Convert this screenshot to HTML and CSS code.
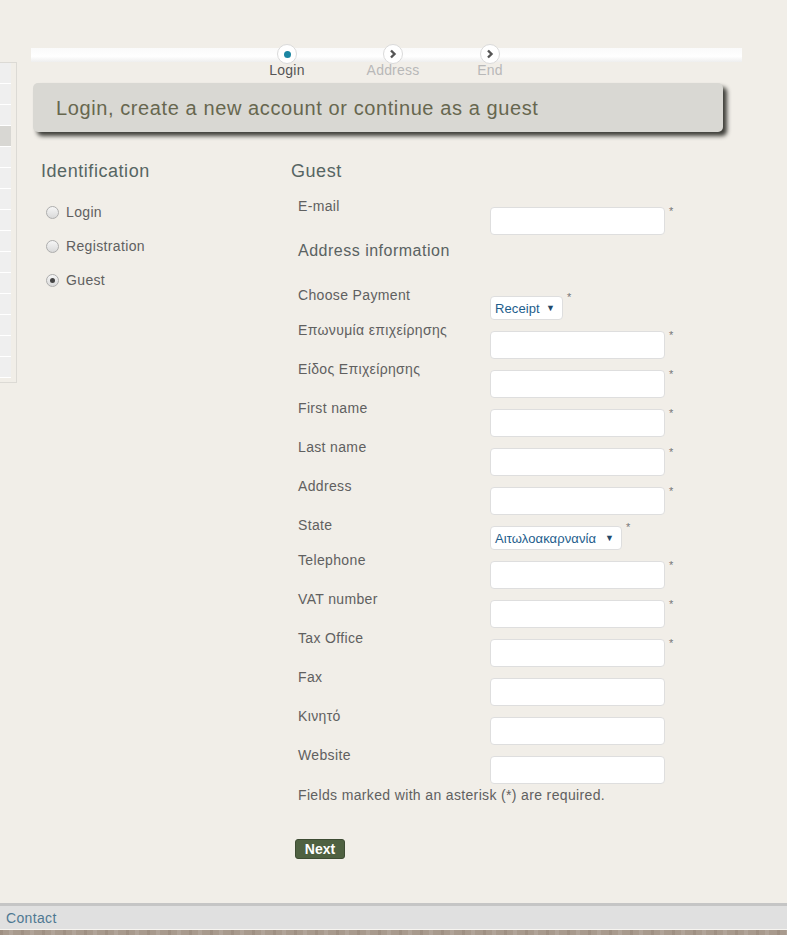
FILE: index.html
```html
<!DOCTYPE html>
<html lang="en">
  <head>
    <meta charset="UTF-8">
    <title>Checkout</title>
    <link rel="stylesheet" href="styles.css">
  </head>
  <body>
    <div class="page">
      <div class="side-stub">
        <ul class="stub-list">
          <li></li><li></li><li></li><li class="active"></li><li></li>
          <li></li><li></li><li></li><li></li><li></li>
          <li></li><li></li><li></li><li></li><li></li>
        </ul>
      </div>

      <div class="content">
        <div class="steps">
          <div class="step step-login current">
            <span class="dot"><i></i></span>
            <span class="step-label">Login</span>
          </div>
          <div class="step step-address">
            <span class="dot"><svg width="10" height="10" viewBox="0 0 10 10"><path d="M3 1.5 L6.5 5 L3 8.5" fill="none" stroke="#555" stroke-width="2.4"/></svg></span>
            <span class="step-label">Address</span>
          </div>
          <div class="step step-end">
            <span class="dot"><svg width="10" height="10" viewBox="0 0 10 10"><path d="M3 1.5 L6.5 5 L3 8.5" fill="none" stroke="#555" stroke-width="2.4"/></svg></span>
            <span class="step-label">End</span>
          </div>
        </div>

        <h1 class="title-box">Login, create a new account or continue as a guest</h1>

        <div class="columns">
          <div class="ident">
            <h2>Identification</h2>
            <ul class="choices">
              <li><span class="radio"></span>Login</li>
              <li><span class="radio"></span>Registration</li>
              <li><span class="radio checked"></span>Guest</li>
            </ul>
          </div>

          <div class="guest">
            <h2>Guest</h2>
            <form class="guest-form">
              <div class="row"><label>E-mail</label><input type="text"><span class="req">*</span></div>
              <h3>Address information</h3>
              <div class="row row-select"><label>Choose Payment</label><span class="select">Receipt<b>&#9660;</b></span><span class="req">*</span></div>
              <div class="row"><label>Επωνυμία επιχείρησης</label><input type="text"><span class="req">*</span></div>
              <div class="row"><label>Είδος Επιχείρησης</label><input type="text"><span class="req">*</span></div>
              <div class="row"><label>First name</label><input type="text"><span class="req">*</span></div>
              <div class="row"><label>Last name</label><input type="text"><span class="req">*</span></div>
              <div class="row"><label>Address</label><input type="text"><span class="req">*</span></div>
              <div class="row row-select"><label>State</label><span class="select select-wide">Αιτωλοακαρνανία<b>&#9660;</b></span><span class="req">*</span></div>
              <div class="row"><label>Telephone</label><input type="text"><span class="req">*</span></div>
              <div class="row"><label>VAT number</label><input type="text"><span class="req">*</span></div>
              <div class="row"><label>Tax Office</label><input type="text"><span class="req">*</span></div>
              <div class="row"><label>Fax</label><input type="text"></div>
              <div class="row"><label>Κινητό</label><input type="text"></div>
              <div class="row"><label>Website</label><input type="text"></div>
              <p class="note">Fields marked with an asterisk (*) are required.</p>
            </form>
            <button class="next" type="button">Next</button>
          </div>
        </div>
      </div>
    </div>

    <div class="footer">
      <div class="footer-bar">Contact</div>
      <div class="footer-wood"></div>
    </div>
  </body>
</html>
```

FILE: styles.css
```css
html, body {
  margin: 0;
  padding: 0;
}

body {
  background: #f1eee8;
  font-family: "Liberation Sans", Arial, sans-serif;
  font-size: 14px;
  letter-spacing: 0.35px;
  color: #606060;
  height: 935px;
  overflow: hidden;
}

.page {
  display: flex;
  align-items: flex-start;
  height: 903px;
}

/* left sidebar, mostly scrolled off */
.side-stub {
  margin-top: 62px;
  width: 16px;
  border: 1px solid #dcdad5;
  border-left: none;
  padding-bottom: 4px;
}

.stub-list {
  list-style: none;
  margin: 0;
  padding: 0;
  width: 11px;
}

.stub-list li {
  height: 20px;
  background: #efefef;
  border-bottom: 1px solid #fff;
}

.stub-list li.active {
  background: #d8d7d3;
}

.content {
  margin-left: 14px;
  width: 711px;
}

/* progress steps */
.steps {
  margin-top: 48px;
  height: 14px;
  background: linear-gradient(#fafafa, #ffffff 60%, #eeeeee);
  display: flex;
  align-items: flex-start;
  padding-left: 216px;
}

.step {
  width: 80px;
  display: flex;
  flex-direction: column;
  align-items: center;
  margin-top: -4px;
}

.step-address { margin-left: 26px; }
.step-end { margin-left: 17px; }

.dot {
  flex-shrink: 0;
  width: 18px;
  height: 18px;
  border-radius: 50%;
  background: #fff;
  border: 1px solid #dadada;
  display: flex;
  align-items: center;
  justify-content: center;
}

.dot i {
  width: 7px;
  height: 7px;
  border-radius: 50%;
  background: #1b86a2;
}

.step-label {
  font-size: 14px;
  line-height: 14px;
  letter-spacing: 0.2px;
  margin-top: -1px;
  color: #b8b8b8;
}

.current .step-label {
  color: #555;
}

/* title */
.title-box {
  margin: 21px 19px 0 2px;
  height: 49px;
  box-sizing: border-box;
  padding: 13px 0 0 23px;
  background: #d9d8d3;
  border-radius: 5px;
  box-shadow: 4px 4px 4px #3f3f3a;
  font-size: 20px;
  line-height: 24px;
  letter-spacing: 0.6px;
  font-weight: normal;
  color: #67674f;
}

/* columns */
.columns {
  display: flex;
  margin-top: 28px;
}

.ident {
  width: 260px;
  padding-left: 10px;
  box-sizing: border-box;
}

h2 {
  margin: 0;
  font-size: 18px;
  line-height: 22px;
  letter-spacing: 0.55px;
  font-weight: normal;
  color: #566563;
}

.choices {
  list-style: none;
  margin: 13px 0 0;
  padding: 0;
}

.choices li {
  height: 34px;
  display: flex;
  align-items: center;
  padding-left: 5px;
}

.radio {
  width: 11px;
  height: 11px;
  border-radius: 50%;
  border: 1px solid #adadad;
  background: linear-gradient(#f6f6f6, #d9d9d9);
  margin-right: 7px;
  display: flex;
  align-items: center;
  justify-content: center;
}

.radio.checked::after {
  content: "";
  width: 5px;
  height: 5px;
  border-radius: 50%;
  background: #444;
}

.guest {
  flex: 1;
}

.guest-form {
  margin: 17px 0 0 7px;
}

.row {
  display: flex;
  align-items: flex-start;
  height: 39px;
}

.row label {
  width: 192px;
  line-height: 14px;
}

.row input {
  margin: 8px 0 0;
  width: 175px;
  height: 28px;
  box-sizing: border-box;
  border: 1px solid #dedede;
  border-radius: 4px;
  background: #fff;
  padding: 0 6px;
  font: inherit;
}

.row-select {
  height: 35px;
}

.select {
  margin-top: 8px;
  height: 24px;
  box-sizing: border-box;
  border: 1px solid #dedede;
  border-radius: 4px;
  background: #fff;
  display: flex;
  align-items: center;
  justify-content: space-between;
  padding: 0 7px 0 4px;
  color: #1d5d8c;
  font-size: 13px;
  letter-spacing: 0.1px;
  width: 73px;
}

.select-wide {
  width: 132px;
}

.select b {
  font-size: 9px;
  color: #23486a;
  font-weight: normal;
}

.req {
  margin: 6px 0 0 4px;
  font-size: 11px;
  color: #777;
}

.row-select .req {
  margin-top: 3px;
}

.guest-form h3 {
  margin: 5px 0 29px;
  font-size: 16px;
  line-height: 16px;
  letter-spacing: 0.5px;
  font-weight: normal;
  color: #5a6262;
}

.note {
  margin: 0;
  line-height: 16px;
}

.next {
  margin: 36px 0 0 4px;
  width: 50px;
  height: 20px;
  border: 1px solid #3e4c33;
  border-radius: 3px;
  background: #4f6141;
  color: #fff;
  font: bold 14px "Liberation Sans", Arial, sans-serif;
  padding: 0;
}

/* footer */
.footer-bar {
  border-top: 3px solid #c5c5c5;
  background: #e0e0e0;
  height: 23px;
  line-height: 25px;
  padding-left: 6px;
  color: #4f7892;
  font-size: 14px;
  border-bottom: 1px solid #f6f4f0;
}

.footer-wood {
  height: 8px;
  background:
    repeating-linear-gradient(90deg, rgba(90, 70, 55, 0.12) 0 3px, transparent 3px 9px, rgba(255, 255, 255, 0.1) 9px 13px, transparent 13px 21px),
    #a89a8d;
}
```
